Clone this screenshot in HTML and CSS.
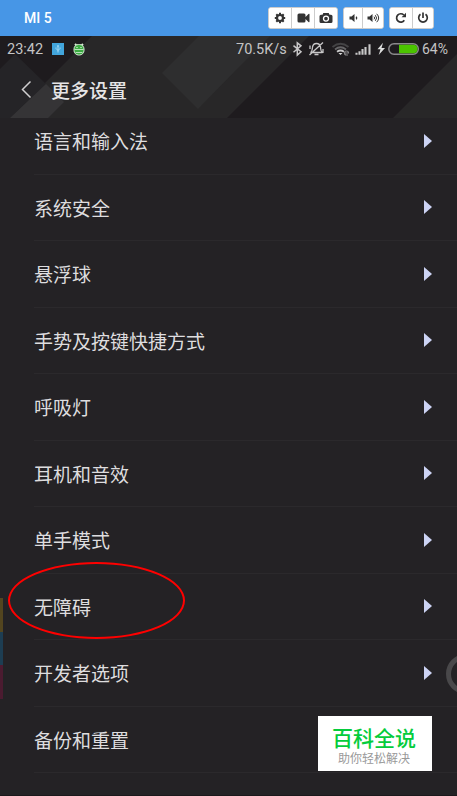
FILE: index.html
```
<!DOCTYPE html>
<html lang="zh-CN">

<head>
    <meta charset="UTF-8">
    <meta name="viewport" content="width=device-width, initial-scale=1.0">
    <title>MI 5</title>
    <link rel="stylesheet" href="styles.css">
</head>

<body>
    <header class="toolbar">
        <h1>MI 5</h1>
        <div class="btn-group">
            <button class="w22" aria-label="settings"><svg width="12" height="12" viewBox="0 0 12 12"><circle cx="6" cy="6" r="3" fill="none" stroke="#333" stroke-width="2.2"/><path d="M6 .8v2M6 9.2v2M.8 6h2M9.2 6h2M2.3 2.3l1.4 1.4M8.3 8.3l1.4 1.4M9.7 2.3L8.3 3.7M3.7 8.3L2.3 9.7" stroke="#333" stroke-width="2"/></svg></button>
            <button class="w23" aria-label="record"><svg width="13" height="12" viewBox="0 0 13 12"><path d="M2 1.5h5q1.5 0 1.5 1.5v1.9L11.5 2q1-.6 1 .4v7.2q0 1-1 .4L8.500 7.100V9q0 1.500-1.500 1.500H2Q.5 10.500.5 9V3Q.5 1.500 2 1.500z" fill="#333"/></svg></button>
            <button class="w23" aria-label="screenshot"><svg width="14" height="12" viewBox="0 0 14 12"><path d="M4.300 1h5.400l.8 1.700h1.500q1.500 0 1.500 1.500v5.300q0 1.500-1.500 1.500H2Q.5 11 .5 9.500V4.200Q.5 2.700 2 2.700h1.500z" fill="#333"/><circle cx="7" cy="6.600" r="2.500" fill="#333" stroke="#fff" stroke-width="1.300"/></svg></button>
        </div>
        <div class="btn-group">
            <button class="w18" aria-label="volume down"><svg width="9" height="10" viewBox="0 0 9 10"><path d="M.5 3.500h2L5.500 1v8L2.500 6.500h-2z" fill="#333"/><path d="M7 3.700q1.400 1.300 0 2.600" fill="none" stroke="#333" stroke-width="1.200"/></svg></button>
            <button class="w21" aria-label="volume up"><svg width="13" height="10" viewBox="0 0 13 10"><path d="M.5 3.500h2L5.500 1v8L2.500 6.500h-2z" fill="#333"/><path d="M7 3.700q1.400 1.300 0 2.600M8.300 2.200q2.600 2.800 0 5.600M9.700.8q4 4.200 0 8.400" fill="none" stroke="#333"/></svg></button>
        </div>
        <div class="btn-group">
            <button class="w22" aria-label="rotate"><svg width="12" height="12" viewBox="0 0 12 12"><path d="M9.300 8.300A4.200 4.200 0 1 1 8.800 3" fill="none" stroke="#333" stroke-width="1.700"/><path d="M11 .8v4.400H6.600z" fill="#333"/></svg></button>
            <button class="w21" aria-label="power"><svg width="12" height="12" viewBox="0 0 12 12"><path d="M3.500 2.300a4.300 4.300 0 1 0 5 0M6 .5v5.500" fill="none" stroke="#333" stroke-width="1.700"/></svg></button>
        </div>
    </header>

    <main class="screen">
        <section class="top">
            <svg class="backdrop" width="457" height="82" viewBox="0 0 457 82">
                <path d="M92 0H309L227 82H10z" fill="#282728"/>
                <path d="M0 33L15 18 46 48 10 82H0z" fill="#252427"/>
                <path d="M46 48L10 82H48L64 66z" fill="#353436"/>
                <path d="M199 0H270L236 34 198 73 162 37z" fill="#2e2e2f"/>
                <path d="M457 18V82H393z" fill="#282728"/>
            </svg>
            <div class="status">
                <span class="time">23:42</span>
                <svg class="usb" width="12" height="12" viewBox="0 0 12 12"><path d="M0 0h12v12H0z" fill="#42a5dc"/><path d="M6 2.500v7M4 4.500v1l2 2 2-2v-1M5 3h2" fill="none" stroke="#a5daf5"/></svg>
                <svg class="bug" width="12" height="13" viewBox="0 0 12 13"><path d="M2 1l1.500 1.500M10 1L8.500 2.500" stroke="#d9ecd6" stroke-width="2"/><rect x="1" y="1.500" width="10" height="10.500" rx="4.500" fill="#3dab43" stroke="#d6ead5"/><path d="M1.500 6.500h9M2.500 9.500h7" stroke="#c5e8c6" stroke-width=".9"/><path d="M3.500 4.500h1M7.500 4.500h1" stroke="#fff"/></svg>
                <span class="speed">70.5K/s</span>
                <svg class="signals" width="132" height="16" viewBox="0 0 132 16" fill="none" stroke="#c9c8c9">
                    <!-- bluetooth -->
                    <path d="M3.500 4.700l7.500 6L7.300 14V1.800L11 4.800l-7.500 6.500" stroke-width="1.500"/>
                    <!-- muted bell -->
                    <path d="M20.500 11.500c2-1 1.600-3 2-5.300.4-2.700 2-3.700 4-3.700s3.600 1 4 3.700c.3 2.300 0 4.300 2 5.300zM24.500 13.500h4M33 1.500L19.500 14M20 4.500v3.500M33 8v4" stroke-width="1.300"/>
                    <!-- wifi -->
                    <path d="M42.500 6q8-6.500 16 0" stroke="#444345" stroke-width="1.800"/>
                    <path d="M45 8.500q5.500-4.500 11 0" stroke="#656466" stroke-width="1.700"/>
                    <path d="M47 10.700q3.500-2.400 7 0" stroke-width="1.800"/>
                    <path d="M48.500 12h4l-2 2z" fill="#ddd" stroke="none"/>
                    <path d="M54.500 12h4q0-2-2-2t-2 2 2 2h1.500" stroke="#858486" stroke-width="1.200"/>
                    <!-- mobile signal -->
                    <path d="M66.500 13.800v-2M69.500 13.800v-3.500M72.500 13.800V8M75.500 13.800V6M79.500 13.800V3.300" stroke-width="2.100"/>
                    <!-- battery -->
                    <path d="M93 1.800l-5.500 6.500h3L88.700 14 95 7h-3.500z" fill="#dedede" stroke="none"/>
                    <rect x="98.800" y="2.800" width="29.500" height="10.500" rx="5.200" stroke="#8b8a8c" stroke-width="1.500"/>
                    <path d="M109 3.800h14q4.500 0 4.500 4.200t-4.500 4.300h-14z" fill="#4bc400" stroke="none"/>
                </svg>
                <span class="percent">64%</span>
            </div>
            <div class="title">
                <svg width="12" height="20" viewBox="0 0 12 20"><path d="M10.500 1.500L2.500 9.500l8 8" fill="none" stroke="#d0cfd0" stroke-width="1.500"/></svg>
                <h2>更多设置</h2>
            </div>
        </section>

        <ul class="settings">
            <li>语言和输入法</li>
            <li>系统安全</li>
            <li>悬浮球</li>
            <li>手势及按键快捷方式</li>
            <li>呼吸灯</li>
            <li>耳机和音效</li>
            <li>单手模式</li>
            <li>无障碍</li>
            <li>开发者选项</li>
            <li class="last">备份和重置</li>
        </ul>

        <div class="edge-colors"></div>
        <div class="float-ball"></div>
        <div class="highlight"></div>
        <div class="watermark">
            <strong>百科全说</strong>
            <span>助你轻松解决</span>
        </div>
    </main>
</body>

</html>
```

FILE: styles.css
```
* {
    margin: 0;
    padding: 0;
    box-sizing: border-box;
}

body {
    width: 457px;
    height: 796px;
    overflow: hidden;
    background: #242225;
    font-family: Roboto, "Noto Sans CJK SC", sans-serif;
}

/* Blue control bar */
.toolbar {
    display: flex;
    align-items: center;
    gap: 5px;
    height: 36px;
    padding: 0 23px 0 24px;
    background: #4796e6;
}

.toolbar h1 {
    flex: 1;
    color: #fff;
    font-size: 14px;
    font-weight: 500;
}

.btn-group {
    display: flex;
    height: 22px;
    border: 1px solid #ccc;
    border-radius: 3px;
    background: #fff;
    overflow: hidden;
}

.btn-group button {
    display: flex;
    align-items: center;
    justify-content: center;
    border: none;
    background: #fff;
}

.btn-group button + button {
    border-left: 1px solid #ccc;
}

.w18 {
    width: 18px;
}

.w21 {
    width: 21px;
}

.w22 {
    width: 22px;
}

.w23 {
    width: 23px;
}

/* Phone screen */
.screen {
    position: relative;
    height: 760px;
    border-bottom: 1px solid #1b181b;
    overflow: hidden;
}

.top {
    position: relative;
    height: 82px;
    background: #1e1b1e;
}

.backdrop {
    position: absolute;
    top: 0;
    left: 0;
}

.status {
    position: relative;
    display: flex;
    align-items: center;
    height: 26px;
    padding-left: 7px;
    color: #c5c4c5;
    font-size: 14.5px;
}

.time {
    width: 45px;
}

.bug {
    margin-left: 9px;
}

.speed {
    width: 54px;
    margin-left: 151px;
}

.signals {
    flex: none;
}

.percent {
    font-size: 14px;
}

.title {
    position: relative;
    display: flex;
    align-items: center;
    gap: 19px;
    height: 56px;
    padding-left: 20px;
}

.title h2 {
    padding-top: 3px;
    color: #e6e5e6;
    font-size: 19px;
    font-weight: 500;
    line-height: 28px;
}

.settings {
    margin-top: -10px;
    padding-left: 34px;
    list-style: none;
}

.settings li {
    display: flex;
    align-items: center;
    justify-content: space-between;
    height: 66.5px;
    padding-right: 25px;
    border-bottom: 1px solid #2b292c;
    color: #dedddf;
    font-size: 19px;
}

.settings li::after {
    content: "";
    border: solid transparent;
    border-width: 7px 0 7px 8px;
    border-left-color: #ccd3f4;
}

.settings li.last::after {
    content: none;
}

/* Overlays */
.edge-colors {
    position: absolute;
    left: 0;
    top: 562px;
    width: 3px;
    height: 101px;
    background: linear-gradient(#53451f 34px, #1d3d52 34px 67px, #4b1b30 67px);
}

.float-ball {
    position: absolute;
    left: 446px;
    top: 618px;
    width: 40px;
    height: 40px;
    border: 5px solid #49484a;
    border-radius: 50%;
}

.highlight {
    position: absolute;
    left: 8px;
    top: 526px;
    width: 177px;
    height: 77px;
    border: 2px solid #f00;
    border-radius: 50%;
}

.watermark {
    position: absolute;
    left: 318px;
    top: 680px;
    display: flex;
    flex-direction: column;
    align-items: center;
    width: 114px;
    height: 55px;
    padding: 10px 2px 0 0;
    background: #fff;
}

.watermark strong {
    color: #05cc3c;
    font-size: 21px;
    font-weight: 500;
    line-height: 26px;
}

.watermark span {
    color: #999;
    font-size: 12px;
    line-height: 14px;
}
```
